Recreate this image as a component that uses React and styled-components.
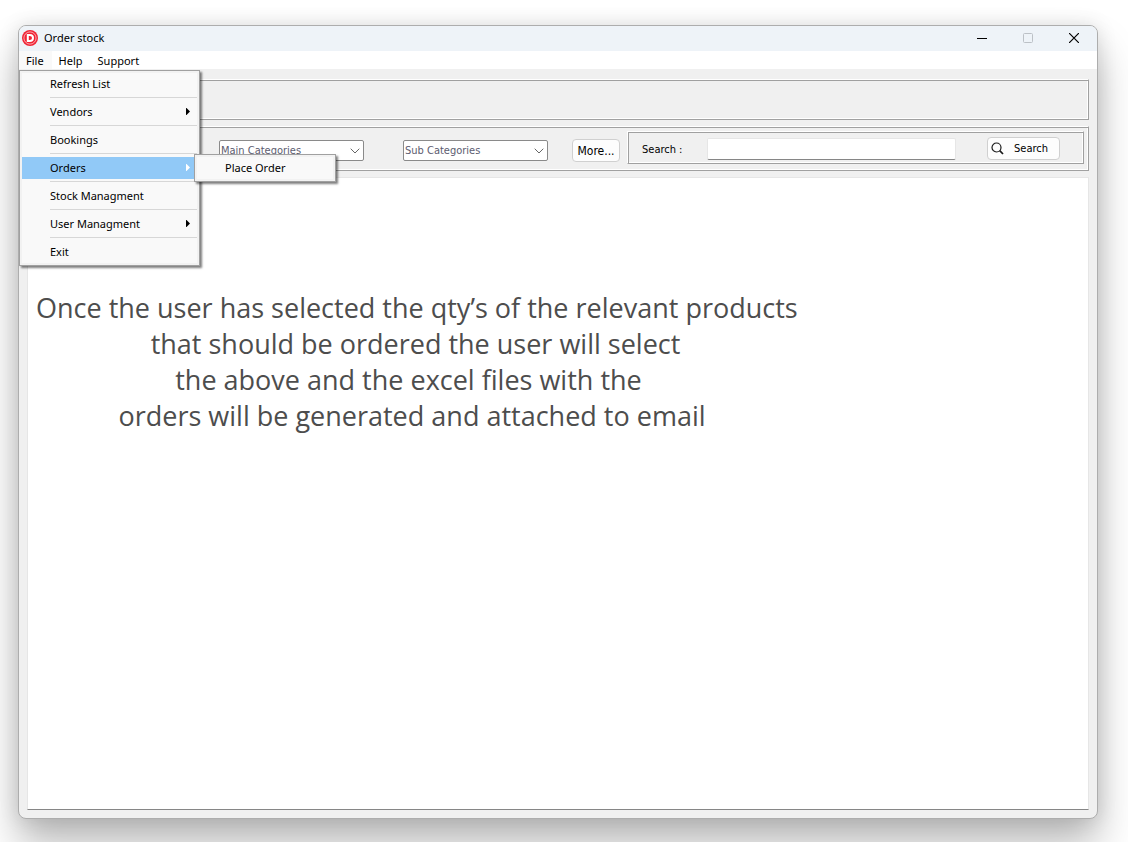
import React from "react";
import styled, { createGlobalStyle, css } from "styled-components";

const uiFont = `"Noto Sans", "Open Sans", sans-serif`;
const formFont = `"DejaVu Sans Condensed", "DejaVu Sans", sans-serif`;
const noticeFont = `"Open Sans", "Noto Sans", sans-serif`;

const GlobalStyle = createGlobalStyle`
  *, *::before, *::after { box-sizing: border-box; }
  body {
    margin: 0;
    background: #fff;
    color: #000;
    font: 11px/18px ${uiFont};
  }
  button, input, select { font: inherit; color: inherit; margin: 0; }
`;

const Desktop = styled.div`
  display: flex;
  min-height: 100vh;
  padding: 25px 30px 23px 18px;
  overflow: hidden;
`;

const Window = styled.main`
  flex: 1;
  min-width: 0;
  display: flex;
  flex-direction: column;
  border: 1px solid #adadad;
  border-radius: 8px;
  background: #f0f0f0;
  box-shadow: 0 26px 40px rgba(0, 0, 0, 0.27), 0 0 20px rgba(0, 0, 0, 0.12);
`;

const TitleBar = styled.header`
  display: flex;
  align-items: center;
  height: 25px;
  padding: 0 0 1px 3px;
  border-radius: 7px 7px 0 0;
  background: #eef3f8;
`;

const Title = styled.h1`
  flex: 1;
  margin: 0 0 0 6px;
  font-size: 11px;
  font-weight: 400;
`;

const CaptionButton = styled.button`
  display: flex;
  align-items: center;
  justify-content: center;
  width: 46px;
  height: 24px;
  padding: 0;
  border: 0;
  background: none;
  color: ${(p) => (p.disabled ? "#bcc1c6" : "#000")};
`;

const MenuBar = styled.nav`
  display: flex;
  height: 18px;
  background: #fff;
`;

const MenuBarItem = styled.div`
  position: relative;
`;

const MenuBarButton = styled.button`
  height: 18px;
  padding: 1px 8px 0 7px;
  border: 0;
  background: ${(p) => (p.$open ? "#f9f9f9" : "transparent")};
  white-space: nowrap;
`;

const menuPanel = css`
  position: absolute;
  z-index: 2;
  margin: 0;
  padding: 2px;
  list-style: none;
  border: 1px solid #a0a0a0;
  background: #f9f9f9;
  box-shadow: inset 0 0 0 2px #f2f2f2, 2px 2px 2px rgba(0, 0, 0, 0.5);
`;

const Menu = styled.ul`
  ${menuPanel}
  top: 19px;
  left: 0;
  width: 181px;
`;

const SubMenu = styled.ul`
  ${menuPanel}
  top: -3px;
  left: 172px;
  width: 142px;
`;

const MenuRow = styled.li`
  position: relative;
`;

const MenuButton = styled.button`
  display: flex;
  align-items: center;
  justify-content: space-between;
  width: 100%;
  height: 22px;
  padding: 0 7px 0 28px;
  border: 0;
  background: ${(p) => (p.$active ? "#91c9f7" : "transparent")};
  text-align: left;

  svg { fill: ${(p) => (p.$active ? "#fff" : "#000")}; }
`;

const Separator = styled.li`
  height: 6px;
  padding: 2px 0 3px 28px;

  &::before {
    content: "";
    display: block;
    height: 1px;
    background: #d7d7d7;
  }
`;

const Content = styled.div`
  flex: 1;
  display: flex;
  flex-direction: column;
  gap: 6px;
  padding: 10px 8px 8px;
`;

const Frame = styled.section`
  border: 1px solid;
  border-color: #fff #a0a0a0 #a0a0a0 #fff;
  box-shadow: inset 1px 1px #a0a0a0, inset -1px -1px #fff;
`;

const InfoFrame = styled(Frame)`
  height: 41px;
`;

const FilterFrame = styled(Frame)`
  display: flex;
  justify-content: flex-end;
  align-items: center;
  height: 45px;
  padding: 0 4px 2px;
`;

const SearchFrame = styled(Frame).attrs({ as: "form" })`
  flex: 0 1 457px;
  display: flex;
  align-items: center;
  height: 33px;
  margin-left: 7px;
  padding: 2px 23px 0 14px;
  font: 11px/18px ${formFont};
`;

const SelectBox = styled.div`
  position: relative;
  width: 145px;
  height: 21px;
  margin: 6px 39px 0 0;

  &:nth-of-type(2) { margin-right: 24px; }

  svg {
    position: absolute;
    right: 4px;
    top: 8px;
    pointer-events: none;
  }
`;

const Select = styled.select`
  appearance: none;
  width: 100%;
  height: 100%;
  padding: 0 20px 0 1px;
  border: 1px solid #8a8a8a;
  border-radius: 2px;
  background: #fff;
  color: #5c5c70;
  font: 11px/18px ${formFont};
`;

const PushButton = styled.button`
  display: flex;
  align-items: center;
  justify-content: ${(p) => (p.$icon ? "flex-start" : "center")};
  gap: 10px;
  width: ${(p) => p.$width}px;
  height: 23px;
  padding: 0 3px;
  border: 1px solid #d0d0d0;
  border-radius: 4px;
  background: #fdfdfd;
  white-space: nowrap;
  font: ${(p) => p.$size || 11}px/18px ${formFont};
`;

const MoreButton = styled(PushButton)`
  margin-top: 6px;
`;

const SearchLabel = styled.label`
  width: 65px;
  padding-top: 2px;
  white-space: nowrap;
`;

const SearchInput = styled.input`
  flex: 1;
  min-width: 0;
  height: 22px;
  margin-right: 31px;
  padding: 0 4px;
  border: 1px solid #e6e6e6;
  border-bottom-color: #868686;
  border-radius: 2px;
  background: #fff;
`;

const StockPanel = styled.section`
  flex: 1;
  padding: 112px 8px 8px;
  border: 1px solid #e6e6e6;
  border-bottom-color: #868686;
  background: #fff;
`;

const Notice = styled.p`
  width: 752px;
  max-width: 100%;
  margin: 0;
  color: #4d4d4d;
  font: 27px/36px ${noticeFont};
  text-align: center;
  white-space: pre;
`;

const Arrow = () => (
  <svg width="5" height="8" viewBox="0 0 5 8" aria-hidden="true">
    <path d="M1 0h.5L5 3.500 1.500 7H1z" />
  </svg>
);

const Chevron = () => (
  <svg width="10" height="6" viewBox="0 0 10 6" fill="none" stroke="#666" aria-hidden="true">
    <path d="M.7.7 5 5 9.3.7" />
  </svg>
);

const Logo = () => (
  <svg width="16" height="16" viewBox="0 0 16 16" aria-hidden="true">
    <circle cx="8" cy="8" r="8" fill="#f02334" />
    <circle cx="8" cy="8" r="6.100" fill="none" stroke="#fff" strokeOpacity=".75" strokeWidth=".8" />
    <path d="M5.800 5h2c2 0 3.200 1.100 3.200 3s-1.200 3-3.200 3h-2z" fill="none" stroke="#fff" strokeWidth="2" />
  </svg>
);

const Magnifier = () => (
  <svg width="13" height="13" viewBox="0 0 13 13" fill="none" stroke="#1a1a1a" aria-hidden="true">
    <circle cx="5.500" cy="5.500" r="4.500" strokeWidth="1.200" />
    <path d="m8.700 8.700 3.300 3.300" strokeWidth="1.700" />
  </svg>
);

const fileMenu = [
  { label: "Refresh List" },
  { label: "Vendors", sub: true },
  { label: "Bookings" },
  { label: "Orders", sub: true, items: ["Place Order"] },
  { label: "Stock Managment" },
  { label: "User Managment", sub: true },
  { label: "Exit" },
];

const noticeLines = [
  "Once the user has selected the qty’s of the relevant products",
  " that should be ordered the user will select",
  "the above and the excel files with the ",
  "orders will be generated and attached to email",
];

function FileMenu() {
  return (
    <Menu>
      {fileMenu.map((entry, i) => (
        <React.Fragment key={entry.label}>
          {i > 0 && <Separator role="separator" />}
          <MenuRow>
            <MenuButton type="button" $active={!!entry.items}>
              {entry.label}
              {entry.sub && <Arrow />}
            </MenuButton>
            {entry.items && (
              <SubMenu>
                {entry.items.map((item) => (
                  <MenuRow key={item}>
                    <MenuButton type="button">{item}</MenuButton>
                  </MenuRow>
                ))}
              </SubMenu>
            )}
          </MenuRow>
        </React.Fragment>
      ))}
    </Menu>
  );
}

function Category({ name }) {
  return (
    <SelectBox>
      <Select aria-label={name} defaultValue={name}>
        <option>{name}</option>
      </Select>
      <Chevron />
    </SelectBox>
  );
}

export default function App() {
  return (
    <Desktop>
      <GlobalStyle />
      <Window>
        <TitleBar>
          <Logo />
          <Title>Order stock</Title>
          <CaptionButton type="button" aria-label="Minimize">
            <svg width="10" height="10" stroke="currentColor"><path d="M0 5.500h10" /></svg>
          </CaptionButton>
          <CaptionButton type="button" aria-label="Maximize" disabled>
            <svg width="10" height="10" fill="none" stroke="currentColor"><rect x=".5" y=".5" width="9" height="9" rx="1" /></svg>
          </CaptionButton>
          <CaptionButton type="button" aria-label="Close">
            <svg width="10" height="10" stroke="currentColor" strokeWidth="1.200"><path d="m0 0 10 10M10 0 0 10" /></svg>
          </CaptionButton>
        </TitleBar>
        <MenuBar>
          <MenuBarItem>
            <MenuBarButton type="button" $open>File</MenuBarButton>
            <FileMenu />
          </MenuBarItem>
          <MenuBarItem><MenuBarButton type="button">Help</MenuBarButton></MenuBarItem>
          <MenuBarItem><MenuBarButton type="button">Support</MenuBarButton></MenuBarItem>
        </MenuBar>
        <Content>
          <InfoFrame />
          <FilterFrame>
            <Category name="Main Categories" />
            <Category name="Sub Categories" />
            <MoreButton type="button" $width={48} $size={12}>More...</MoreButton>
            <SearchFrame onSubmit={(e) => e.preventDefault()}>
              <SearchLabel htmlFor="search">Search :</SearchLabel>
              <SearchInput id="search" type="text" />
              <PushButton type="submit" $width={73} $icon>
                <Magnifier />
                Search
              </PushButton>
            </SearchFrame>
          </FilterFrame>
          <StockPanel>
            <Notice>{noticeLines.join("\n")}</Notice>
          </StockPanel>
        </Content>
      </Window>
    </Desktop>
  );
}
